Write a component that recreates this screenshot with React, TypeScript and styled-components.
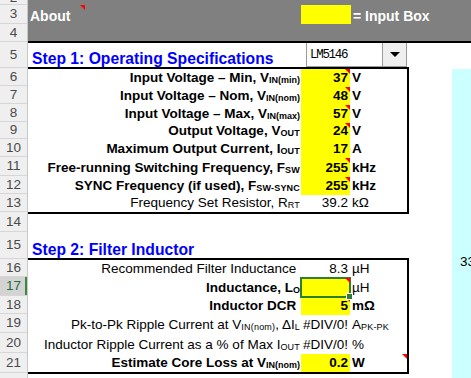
import React from 'react';
import styled, { createGlobalStyle } from 'styled-components';

const GlobalStyle = createGlobalStyle`
  html, body { margin: 0; padding: 0; background: #fff; }
  body { font-family: "Liberation Sans", Arial, sans-serif; overflow: hidden; }
  * { box-sizing: border-box; }
`;

// row header heights, taken from the sheet
const headerRows: [number, number][] = [
	[2, 5], [3, 19], [4, 18], [5, 26], [6, 18], [7, 18], [8, 18], [9, 17],
	[10, 18], [11, 19], [12, 18], [13, 18], [14, 20], [15, 27], [16, 18],
	[17, 19], [18, 18], [19, 19], [20, 20], [21, 20], [22, 20],
];

export default function App(): JSX.Element {
	return (
		<>
			<GlobalStyle />
			<Sheet>
				<RowHeaders>
					{headerRows.map(([n, h]) => (
						<RowNum key={n} $h={h} $active={n === 17} $cut={n === 2}>
							<span>{n}</span>
						</RowNum>
					))}
				</RowHeaders>
				<Content>
					<Band>
						<AboutCell>About</AboutCell>
						<div />
						<Swatch />
						<BandText>= Input Box</BandText>
					</Band>
					<Body>
						<Main>
							<Heading $h={26}>
								<HeadingText>Step 1: Operating Specifications</HeadingText>
								<Select>
									<SelectValue>LM5146</SelectValue>
									<SelectButton><Caret /></SelectButton>
								</Select>
							</Heading>
							<Box>
								<SpecRow h={18} bold yellow note value="37" unit="V"
									label={<>Input Voltage – Min, V<Sub>IN(min)</Sub></>} />
								<SpecRow h={18} bold yellow note value="48" unit="V"
									label={<>Input Voltage – Nom, V<Sub>IN(nom)</Sub></>} />
								<SpecRow h={18} bold yellow note value="57" unit="V"
									label={<>Input Voltage – Max, V<Sub>IN(max)</Sub></>} />
								<SpecRow h={17} bold yellow note value="24" unit="V"
									label={<>Output Voltage, V<Sub $light>OUT</Sub></>} />
								<SpecRow h={18} bold yellow value="17" unit="A"
									label={<>Maximum Output Current, I<Sub $light>OUT</Sub></>} />
								<SpecRow h={19} bold yellow note value="255" unit="kHz"
									label={<>Free-running Switching Frequency, F<Sub $light>SW</Sub></>} />
								<SpecRow h={18} bold yellow note value="255" unit="kHz"
									label={<>SYNC Frequency (if used), F<Sub $light>SW-SYNC</Sub></>} />
								<SpecRow h={19} last value="39.2" unit="kΩ"
									label={<>Frequency Set Resistor, R<Sub $light>RT</Sub></>} />
							</Box>
							<Blank $h={19} />
							<Heading $h={27}>
								<HeadingText>Step 2: Filter Inductor</HeadingText>
							</Heading>
							<Box>
								<SpecRow h={18} value="8.3" unit="µH" label={<>Recommended Filter Inductance </>} />
								<SpecRow h={19} bold yellow note selected value="" unit="µH" unitLight
									label={<>Inductance, L<Sub>O</Sub></>} />
								<SpecRow h={18} bold yellow note value="5" unit="mΩ" label={<>Inductor DCR </>} />
								<SpecRow h={19} value="#DIV/0!"
									unit={<>A<Sub $light>PK-PK</Sub></>}
									label={<>Pk-to-Pk Ripple Current at V<Sub $light>IN(nom)</Sub>, ΔI<Sub $light>L</Sub></>} />
								<SpecRow h={20} value="#DIV/0!" unit="%"
									label={<>Inductor Ripple Current as a % of Max I<Sub $light>OUT</Sub></>} />
								<SpecRow h={20} bold yellow last unitNote value="0.2" unit="W"
									label={<>Estimate Core Loss at V<Sub>IN(nom)</Sub></>} />
							</Box>
						</Main>
						<Side>
							<Blank $h={26} />
							<Cyan>33</Cyan>
						</Side>
					</Body>
				</Content>
			</Sheet>
		</>
	);
}

type SpecRowProps = {
	h: number;
	label: React.ReactNode;
	value: string;
	unit: React.ReactNode;
	bold?: boolean;
	yellow?: boolean;
	note?: boolean;
	unitNote?: boolean;
	unitLight?: boolean;
	selected?: boolean;
	last?: boolean;
};

function SpecRow({ h, label, value, unit, bold, yellow, note, unitNote, unitLight, selected, last }: SpecRowProps) {
	return (
		<Row $h={h} $last={last} $bold={bold}>
			<Label>{label}</Label>
			<Value $yellow={yellow} $note={note} $selected={selected}>{value}</Value>
			<Unit $note={unitNote} $light={unitLight}>{unit}</Unit>
		</Row>
	);
}

const Sheet = styled.div`
	display: flex;
	width: 471px;
	height: 378px;
	overflow: hidden;
	background: #fff;
`;

const RowHeaders = styled.div`
	width: 28px;
	flex: none;
	display: flex;
	flex-direction: column;
	background: #efefef;
	border-right: 1px solid #c8c8c8;
`;

const RowNum = styled.div<{ $h: number; $active?: boolean; $cut?: boolean }>`
	height: ${p => p.$h}px;
	flex: none;
	display: flex;
	justify-content: center;
	align-items: ${p => (p.$cut ? 'flex-end' : 'center')};
	overflow: hidden;
	font-size: 13.5px;
	line-height: ${p => (p.$cut ? '5px' : '16px')};
	color: ${p => (p.$active ? '#1e6b41' : '#4a4a4a')};
	background: ${p => (p.$active ? '#d3d3d3' : 'transparent')};
	border-bottom: 1px solid #d6d6d6;
	box-shadow: ${p => (p.$active ? 'inset -2px 0 0 #3b8a3a' : 'none')};
	span { transform: translateY(${p => (p.$cut ? '-4px' : '0')}); }
`;

const Content = styled.div`
	flex: 1;
	display: flex;
	flex-direction: column;
`;

const Band = styled.div`
	height: 43px;
	flex: none;
	background: #808080;
	border-bottom: 2px solid #000;
	padding-top: 5px;
	display: grid;
	grid-template-columns: 57px 216px 50px 1fr;
	grid-template-rows: 19px;
	color: #fff;
	font-weight: bold;
	font-size: 14px;
`;

const AboutCell = styled.div`
	position: relative;
	display: flex;
	align-items: flex-end;
	padding-left: 2px;
	line-height: 16px;
	&::after {
		content: '';
		position: absolute;
		top: 0;
		right: 0;
		border-left: 5px solid transparent;
		border-top: 5px solid #ff0000;
	}
`;

const Swatch = styled.div`
	background: #ffff00;
`;

const BandText = styled.div`
	display: flex;
	align-items: flex-end;
	padding-left: 2px;
	line-height: 16px;
	white-space: nowrap;
`;

const Body = styled.div`
	flex: 1;
	display: flex;
`;

const Main = styled.div`
	width: 381px;
	flex: none;
	display: flex;
	flex-direction: column;
`;

const Heading = styled.div<{ $h: number }>`
	height: ${p => p.$h}px;
	display: grid;
	grid-template-columns: 273px 1fr;
	border-bottom: 2px solid #000;
`;

const HeadingText = styled.div`
	display: flex;
	align-items: flex-end;
	padding-left: 4px;
	color: #0000ff;
	font-weight: bold;
	font-size: 15.7px;
	line-height: 17px;
	white-space: nowrap;
`;

const Select = styled.div`
	margin-left: 5px;
	margin-right: 2px;
	height: 24px;
	display: flex;
	background: #fff;
	border: 1px solid #9a9a9a;
	border-top: none;
`;

const SelectValue = styled.div`
	flex: 1;
	display: flex;
	align-items: center;
	padding-left: 3px;
	font-family: "Liberation Mono", "Courier New", monospace;
	font-size: 12.5px;
	letter-spacing: -1.3px;
	color: #000;
`;

const SelectButton = styled.div`
	width: 24px;
	display: flex;
	align-items: center;
	justify-content: center;
	background: #efefef;
	border-left: 1px solid #9a9a9a;
`;

const Caret = styled.div`
	width: 0;
	height: 0;
	border-left: 5px solid transparent;
	border-right: 5px solid transparent;
	border-top: 5px solid #000;
`;

const Box = styled.div`
	border-right: 2px solid #000;
	display: flex;
	flex-direction: column;
`;

const Row = styled.div<{ $h: number; $last?: boolean; $bold?: boolean }>`
	height: ${p => p.$h}px;
	display: grid;
	grid-template-columns: 273px 49px 57px;
	border-bottom: ${p => (p.$last ? '2px solid #000' : 'none')};
	font-size: 13.5px;
	line-height: 16px;
	font-weight: ${p => (p.$bold ? 'bold' : 'normal')};
	color: #000;
	& > div {
		display: flex;
		align-items: flex-end;
		padding-bottom: 1px;
		white-space: pre;
	}
`;

const Label = styled.div`
	justify-content: flex-end;
	padding-right: 1px;
`;

const Value = styled.div<{ $yellow?: boolean; $note?: boolean; $selected?: boolean }>`
	position: relative;
	justify-content: flex-end;
	padding-right: 2px;
	background: ${p => (p.$yellow ? '#ffff00' : 'transparent')};
	outline: ${p => (p.$selected ? '2px solid #2f7d32' : 'none')};
	outline-offset: -1px;
	z-index: ${p => (p.$selected ? 1 : 0)};
	&::after {
		content: '';
		display: ${p => (p.$note ? 'block' : 'none')};
		position: absolute;
		top: 0;
		right: 0;
		border-left: 5px solid transparent;
		border-top: 5px solid #ff0000;
	}
	&::before {
		content: '';
		display: ${p => (p.$selected ? 'block' : 'none')};
		position: absolute;
		right: -3px;
		bottom: -3px;
		width: 5px;
		height: 5px;
		background: #2f7d32;
		border: 1px solid #fff;
	}
`;

const Unit = styled.div<{ $note?: boolean; $light?: boolean }>`
	position: relative;
	padding-left: 2px;
	font-weight: ${p => (p.$light ? 'normal' : 'inherit')};
	&::after {
		content: '';
		display: ${p => (p.$note ? 'block' : 'none')};
		position: absolute;
		top: 0;
		right: 0;
		border-left: 5px solid transparent;
		border-top: 5px solid #ff0000;
	}
`;

const Sub = styled.span<{ $light?: boolean }>`
	font-size: 9px;
	position: relative;
	top: 2px;
	font-weight: inherit;
	letter-spacing: ${p => (p.$light ? '0.2px' : '0')};
`;

const Blank = styled.div<{ $h: number }>`
	height: ${p => p.$h}px;
	flex: none;
`;

const Side = styled.div`
	flex: 1;
	display: flex;
	flex-direction: column;
`;

const Cyan = styled.div`
	flex: 1;
	margin-left: 43px;
	background: #ccffff;
	padding-top: 186px;
	padding-left: 8px;
	font-size: 13.5px;
	line-height: 14px;
	white-space: nowrap;
	overflow: hidden;
`;
